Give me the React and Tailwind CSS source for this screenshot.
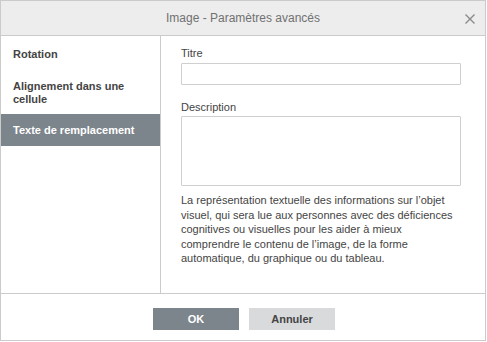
const MENU = [
  { label: 'Rotation', cls: 'h-[36px]' },
  { label: 'Alignement dans une cellule', cls: 'h-[42px]' },
  { label: 'Texte de remplacement', cls: 'h-[32px]', active: true },
]

export default function App() {
  return (
    <div
      className="w-[487px] h-[342px] bg-white text-[11px] text-[#444]"
      style={{ fontFamily: '"Liberation Sans", Arial, sans-serif' }}
    >
      <div className="w-[486px] h-[341px] border border-[#cbcbcb] flex flex-col">
        {/* HEADER */}
        <div className="relative h-[35px] shrink-0 bg-[#ededed] border-b border-[#cbcbcb] flex items-center justify-center">
          <span className="text-[12px] text-[#717171]">Image - Paramètres avancés</span>
          <svg
            className="absolute right-[10px] top-[13px]"
            width="10"
            height="10"
            viewBox="0 0 10 10"
            fill="none"
            stroke="#8a8a8a"
            strokeWidth="1.4"
          >
            <path d="M0.5 0.5 L9.5 9.5 M9.5 0.5 L0.5 9.5" />
          </svg>
        </div>

        {/* BODY */}
        <div className="flex flex-1 min-h-0">
          <div className="w-[160px] shrink-0 border-r border-[#cbcbcb] flex flex-col">
            {MENU.map((m) => (
              <div
                key={m.label}
                className={`${m.cls} flex items-center px-[12px] leading-[13px] font-bold ${
                  m.active ? 'bg-[#7d858c] text-white' : 'text-[#444]'
                }`}
              >
                {m.label}
              </div>
            ))}
          </div>

          <div className="flex-1 pl-[20px] pt-[11px]">
            <div className="leading-[13px]">Titre</div>
            <div className="mt-[3px] w-[280px] h-[22px] border border-[#cfcfcf] rounded-[1px]" />
            <div className="mt-[16px] leading-[13px]">Description</div>
            <div className="mt-[2px] w-[280px] h-[70px] border border-[#cfcfcf] rounded-[1px]" />
            <p className="mt-[7px] w-[280px] leading-[14.5px] text-[11px] text-[#444]">
              La représentation textuelle des informations sur l’objet visuel, qui sera lue aux
              personnes avec des déficiences cognitives ou visuelles pour les aider à mieux
              comprendre le contenu de l’image, de la forme automatique, du graphique ou du
              tableau.
            </p>
          </div>
        </div>

        {/* FOOTER */}
        <div className="h-[47px] shrink-0 border-t border-[#cbcbcb] flex justify-center gap-[10px] pt-[14px] pl-[2px]">
          <button className="w-[86px] h-[22px] bg-[#7d858c] text-white font-bold">OK</button>
          <button className="w-[86px] h-[22px] bg-[#d8dadc] text-[#444] font-bold">Annuler</button>
        </div>
      </div>
    </div>
  )
}
